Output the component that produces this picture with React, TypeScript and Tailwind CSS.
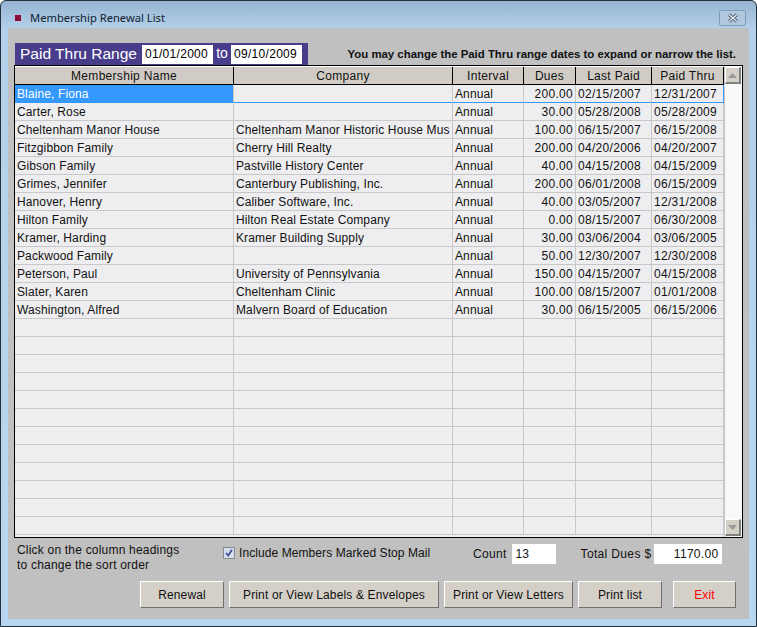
import React from 'react';

const members = [
  ['Blaine, Fiona', '', 'Annual', '200.00', '02/15/2007', '12/31/2007'],
  ['Carter, Rose', '', 'Annual', '30.00', '05/28/2008', '05/28/2009'],
  ['Cheltenham Manor House', 'Cheltenham Manor Historic House Mus', 'Annual', '100.00', '06/15/2007', '06/15/2008'],
  ['Fitzgibbon Family', 'Cherry Hill Realty', 'Annual', '200.00', '04/20/2006', '04/20/2007'],
  ['Gibson Family', 'Pastville History Center', 'Annual', '40.00', '04/15/2008', '04/15/2009'],
  ['Grimes, Jennifer', 'Canterbury Publishing, Inc.', 'Annual', '200.00', '06/01/2008', '06/15/2009'],
  ['Hanover, Henry', 'Caliber Software, Inc.', 'Annual', '40.00', '03/05/2007', '12/31/2008'],
  ['Hilton Family', 'Hilton Real Estate Company', 'Annual', '0.00', '08/15/2007', '06/30/2008'],
  ['Kramer, Harding', 'Kramer Building Supply', 'Annual', '30.00', '03/06/2004', '03/06/2005'],
  ['Packwood Family', '', 'Annual', '50.00', '12/30/2007', '12/30/2008'],
  ['Peterson, Paul', 'University of Pennsylvania', 'Annual', '150.00', '04/15/2007', '04/15/2008'],
  ['Slater, Karen', 'Cheltenham Clinic', 'Annual', '100.00', '08/15/2007', '01/01/2008'],
  ['Washington, Alfred', 'Malvern Board of Education', 'Annual', '30.00', '06/15/2005', '06/15/2006'],
];

const emptyRows = Array.from({ length: 12 }, () => ['', '', '', '', '', '']);
const rows = [...members, ...emptyRows];

const headings = ['Membership Name', 'Company', 'Interval', 'Dues', 'Last Paid', 'Paid Thru'];
const gridCols = 'grid grid-cols-[219px_219px_71px_52px_76px_72px]';

function ActionButton({ label, width, danger }: { label: string; width: string; danger?: boolean }) {
  return (
    <button
      className={`${width} h-[27px] bg-[#d4d0c8] border border-t-white border-l-white border-r-[#6f6f6f] border-b-[#6f6f6f] text-[12px] tracking-[0.15px] ${danger ? 'text-[#ff0000]' : 'text-[#111]'}`}
    >
      {label}
    </button>
  );
}

function ScrollButton({ up }: { up?: boolean }) {
  return (
    <div className="h-[17px] bg-[#d4d0c8] border-t border-l border-t-white border-l-white border-r-2 border-b-2 border-r-[#808080] border-b-[#808080] flex items-center justify-center">
      <svg width="9" height="5" viewBox="0 0 9 5">
        <path d={up ? 'M4.5 0 L9 5 L0 5 Z' : 'M0 0 L9 0 L4.5 5 Z'} fill="#9a9a9a" />
      </svg>
    </div>
  );
}

export default function App() {
  return (
    <div className="w-[757px] h-[627px] overflow-hidden rounded-t-[6px] border border-[#20303c] bg-[linear-gradient(180deg,#96b4d2_0px,#b4d0ea_28px,#b9d7f0_100%)] flex flex-col font-['Liberation_Sans',sans-serif] text-[12px] text-[#111]">
      {/* title bar */}
      <div className="h-[27px] shrink-0 flex items-center pt-[7px] pl-[14px] pr-[10px]">
        <div className="w-[6px] h-[6px] bg-[#8c0c38] mr-[9px]" />
        <span className="font-['Noto_Sans',sans-serif] text-[11.2px] text-[#10202c]">Membership Renewal List</span>
        <div className="ml-auto w-[27px] h-[16px] rounded-[2px] border border-[#7f9cb8] bg-[#b0c8e0] flex items-center justify-center">
          <svg width="14" height="10" viewBox="0 0 14 10">
            <path d="M3 1.5 L11 8.5 M11 1.5 L3 8.5" stroke="#50606e" strokeWidth="3" />
            <path d="M3 1.5 L11 8.5 M11 1.5 L3 8.5" stroke="#e8eef4" strokeWidth="1.2" />
          </svg>
        </div>
      </div>

      {/* client area */}
      <div className="mx-[7px] h-[591px] bg-[#c0c0c0] flex flex-col px-[6px]">
        <div className="h-[37px] shrink-0 flex items-end">
          <div className="w-[293px] h-[22px] bg-[#483d8b] ml-px flex items-center pl-[5px] text-white">
            <span className="text-[15.5px] w-[122px] whitespace-nowrap">Paid Thru Range</span>
            <div className="w-[71px] h-[19px] mt-px bg-white text-black pl-[3px] leading-[19px] tracking-[0.3px]">01/01/2000</div>
            <span className="w-[18px] text-center text-[14px] -mt-[2px]">to</span>
            <div className="w-[71px] h-[19px] mt-px bg-white text-black pl-[3px] leading-[19px] tracking-[0.3px]">09/10/2009</div>
          </div>
          <span className="ml-auto mb-[2px] mr-[7px] font-bold text-[11.4px] whitespace-nowrap">
            You may change the Paid Thru range dates to expand or narrow the list.
          </span>
        </div>

        {/* table */}
        <div className="w-[729px] h-[473px] shrink-0 border border-black flex overflow-hidden">
          <div className="w-[709px] shrink-0 bg-[#eeeef0]">
            <div className={`${gridCols} h-[19px] bg-[#d4d0c8] border-t border-white`}>
              {headings.map((h) => (
                <button
                  key={h}
                  className="h-[18px] bg-[#d0ccc5] border-r border-r-black border-b border-b-black text-center text-[12px] tracking-[0.3px] leading-[19px]"
                >
                  {h}
                </button>
              ))}
            </div>
            {rows.map((row, i) => (
              <div key={i} className={`${gridCols} h-[18px]`}>
                {row.map((cell, c) => (
                  <div
                    key={c}
                    className={`h-[18px] overflow-hidden whitespace-nowrap px-[2px] leading-[18px] ${c > 2 ? 'tracking-[0.3px]' : 'tracking-[0.12px]'} border-r border-b ${
                      i === 0 ? 'border-b-[#3399ff]' : 'border-b-[#c8c8c8]'
                    } ${i === 0 && c === 5 ? 'border-r-[#3399ff]' : 'border-r-[#c8c8c8]'} ${
                      i === 0 && c === 0 ? 'bg-[#3399ff] text-white' : ''
                    } ${c === 3 ? 'text-right' : ''}`}
                  >
                    {cell}
                  </div>
                ))}
              </div>
            ))}
          </div>
          <div className="flex-1 flex flex-col pt-px pb-px pr-px border-l border-[#c8c8c8] bg-[repeating-conic-gradient(#ffffff_0_25%,#f3f3f3_0_50%)] bg-[length:2px_2px]">
            <ScrollButton up />
            <div className="flex-1" />
            <ScrollButton />
          </div>
        </div>

        {/* footer info */}
        <div className="h-[43px] shrink-0 flex items-start pt-[6px]">
          <div className="w-[209px] pl-[3px] -mt-px leading-[15px] tracking-[0.2px]">
            Click on the column headings
            <br />
            to change the sort order
          </div>
          <div className="flex items-center h-[17px]">
            <div className="w-[12px] h-[12px] border border-[#8a8a8a] bg-[#d4dcf0] flex items-center justify-center">
              <svg width="10" height="10" viewBox="0 0 10 10">
                <path d="M2 5 L4.2 7.5 L8 1.8" fill="none" stroke="#3d4f96" strokeWidth="1.7" />
              </svg>
            </div>
            <span className="ml-[4px] w-[234px] whitespace-nowrap tracking-[0.08px]">Include Members Marked Stop Mail</span>
          </div>
          <span className="mt-px tracking-[0.3px]">Count</span>
          <div className="w-[44px] h-[20px] ml-[5px] bg-white pl-[4px] leading-[20px]">13</div>
          <span className="mt-px ml-[25px] tracking-[0.35px]">Total Dues $</span>
          <div className="w-[68px] h-[20px] ml-[3px] bg-white pr-[4px] text-right leading-[20px] tracking-[0.3px]">1170.00</div>
        </div>

        {/* buttons */}
        <div className="flex items-start pl-[126px] gap-[5px]">
          <ActionButton label="Renewal" width="w-[84px]" />
          <ActionButton label="Print or View Labels & Envelopes" width="w-[210px]" />
          <ActionButton label="Print or View Letters" width="w-[129px]" />
          <ActionButton label="Print list" width="w-[84px]" />
          <div className="ml-[6px]">
            <ActionButton label="Exit" width="w-[63px]" danger />
          </div>
        </div>
      </div>
    </div>
  );
}
